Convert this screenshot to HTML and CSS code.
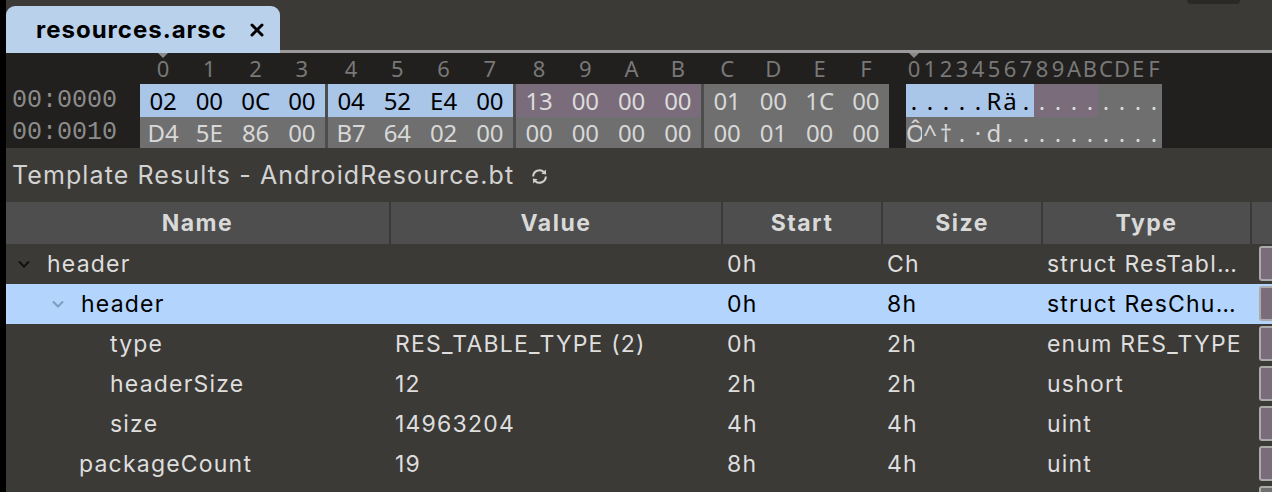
FILE: index.html
```html
<!DOCTYPE html>
<html>
<head>
<meta charset="utf-8">
<link rel="stylesheet" href="styles.css">
</head>
<body>
<div class="app">
  <div class="tabbar">
    <div class="tab">
      <span class="tab-title">resources.arsc</span>
      <svg class="tab-close" width="14" height="14" viewBox="0 0 14 14"><path d="M2 2 L12 12 M12 2 L2 12" stroke="#000" stroke-width="3" stroke-linecap="round"/></svg>
    </div>
    <div class="pill"></div>
  </div>

  <div class="hex">
    <div class="hex-row hex-head">
      <div class="addr"></div>
      <div class="groups">
        <div class="grp"><span class="mark">0</span><span>1</span><span>2</span><span>3</span></div>
        <div class="grp"><span>4</span><span>5</span><span>6</span><span>7</span></div>
        <div class="grp"><span>8</span><span>9</span><span>A</span><span>B</span></div>
        <div class="grp"><span>C</span><span>D</span><span>E</span><span>F</span></div>
      </div>
      <div class="ascii"><span class="mark">0</span><span>1</span><span>2</span><span>3</span><span>4</span><span>5</span><span>6</span><span>7</span><span>8</span><span>9</span><span>A</span><span>B</span><span>C</span><span>D</span><span>E</span><span>F</span></div>
    </div>
    <div class="hex-row data r1">
      <div class="addr">00:0000</div>
      <div class="groups">
        <div class="grp blue"><span>02</span><span>00</span><span>0C</span><span>00</span></div>
        <div class="grp blue"><span>04</span><span>52</span><span>E4</span><span>00</span></div>
        <div class="grp purple"><span>13</span><span>00</span><span>00</span><span>00</span></div>
        <div class="grp grey"><span>01</span><span>00</span><span>1C</span><span>00</span></div>
      </div>
      <div class="ascii"><span class="blue">.</span><span class="blue">.</span><span class="blue">.</span><span class="blue">.</span><span class="blue">.</span><span class="blue">R</span><span class="blue">ä</span><span class="blue">.</span><span class="purple">.</span><span class="purple">.</span><span class="purple">.</span><span class="purple">.</span><span class="grey">.</span><span class="grey">.</span><span class="grey">.</span><span class="grey">.</span></div>
    </div>
    <div class="hex-row data r2">
      <div class="addr">00:0010</div>
      <div class="groups">
        <div class="grp grey"><span>D4</span><span>5E</span><span>86</span><span>00</span></div>
        <div class="grp grey"><span>B7</span><span>64</span><span>02</span><span>00</span></div>
        <div class="grp grey"><span>00</span><span>00</span><span>00</span><span>00</span></div>
        <div class="grp grey"><span>00</span><span>01</span><span>00</span><span>00</span></div>
      </div>
      <div class="ascii"><span class="grey">Ô</span><span class="grey">^</span><span class="grey">†</span><span class="grey">.</span><span class="grey">·</span><span class="grey">d</span><span class="grey">.</span><span class="grey">.</span><span class="grey">.</span><span class="grey">.</span><span class="grey">.</span><span class="grey">.</span><span class="grey">.</span><span class="grey">.</span><span class="grey">.</span><span class="grey">.</span></div>
    </div>
  </div>

  <div class="tpl-title">
    <span>Template Results - AndroidResource.bt</span>
    <svg class="refresh" width="19" height="17" viewBox="0 0 18 16">
      <path d="M3 8 A6 6 0 0 1 13.2 3.8" fill="none" stroke="#cfcfcf" stroke-width="1.9"/>
      <polygon points="15.3,6.0 15.0,1.4 10.8,5.4" fill="#cfcfcf"/>
      <path d="M15 8 A6 6 0 0 1 4.8 12.2" fill="none" stroke="#cfcfcf" stroke-width="1.9"/>
      <polygon points="2.7,10.0 3.0,14.6 7.2,10.6" fill="#cfcfcf"/>
    </svg>
  </div>

  <div class="table">
    <div class="trow thead">
      <div class="th">Name</div>
      <div class="th">Value</div>
      <div class="th">Start</div>
      <div class="th">Size</div>
      <div class="th">Type</div>
      <div class="th"></div>
    </div>
    <div class="trow">
      <div class="td name lvl0"><svg class="chev dark" width="12" height="8" viewBox="0 0 12 8"><path d="M1 1.5 L6 6.5 L11 1.5" fill="none" stroke-width="2"/></svg><span>header</span></div>
      <div class="td"></div>
      <div class="td">0h</div>
      <div class="td">Ch</div>
      <div class="td">struct ResTableHeader</div>
      <div class="td sw"><div class="swatch"></div></div>
    </div>
    <div class="trow selected">
      <div class="td name lvl1"><svg class="chev light" width="12" height="8" viewBox="0 0 12 8"><path d="M1 1.5 L6 6.5 L11 1.5" fill="none" stroke-width="2"/></svg><span>header</span></div>
      <div class="td"></div>
      <div class="td">0h</div>
      <div class="td">8h</div>
      <div class="td">struct ResChunkHeader</div>
      <div class="td sw"><div class="swatch"></div></div>
    </div>
    <div class="trow">
      <div class="td name leaf2">type</div>
      <div class="td">RES_TABLE_TYPE (2)</div>
      <div class="td">0h</div>
      <div class="td">2h</div>
      <div class="td">enum RES_TYPE</div>
      <div class="td sw"><div class="swatch"></div></div>
    </div>
    <div class="trow">
      <div class="td name leaf2">headerSize</div>
      <div class="td">12</div>
      <div class="td">2h</div>
      <div class="td">2h</div>
      <div class="td">ushort</div>
      <div class="td sw"><div class="swatch"></div></div>
    </div>
    <div class="trow">
      <div class="td name leaf2">size</div>
      <div class="td">14963204</div>
      <div class="td">4h</div>
      <div class="td">4h</div>
      <div class="td">uint</div>
      <div class="td sw"><div class="swatch"></div></div>
    </div>
    <div class="trow">
      <div class="td name leaf1">packageCount</div>
      <div class="td">19</div>
      <div class="td">8h</div>
      <div class="td">4h</div>
      <div class="td">uint</div>
      <div class="td sw"><div class="swatch"></div></div>
    </div>
    <div class="trow">
      <div class="td name leaf1"></div>
      <div class="td"></div>
      <div class="td"></div>
      <div class="td"></div>
      <div class="td"></div>
      <div class="td sw"><div class="swatch grey"></div></div>
    </div>
  </div>
</div>
</body>
</html>
```

FILE: styles.css
```css
html, body {
  margin: 0;
  padding: 0;
  background: #3c3a36;
  overflow: hidden;
}

.app {
  width: 1266px;
  height: 492px;
  border-left: 6px solid #000;
  background: #3c3a36;
  overflow: hidden;
  font-family: Inter, "Noto Sans", sans-serif;
}

/* ---------- tab bar ---------- */
.tabbar {
  height: 50px;
  border-bottom: 3px solid #9a9a9a;
  display: flex;
  align-items: flex-end;
}

.tab {
  box-sizing: border-box;
  width: 274px;
  height: 47px;
  margin-bottom: -3px;
  background: #b9d1eb;
  border-radius: 9px 9px 0 0;
  display: flex;
  align-items: center;
  padding-left: 30px;
}

.tab-title {
  font-weight: 700;
  font-size: 24px;
  letter-spacing: 1px;
  color: #000;
}

.tab-close {
  margin-left: 23px;
}

.pill {
  align-self: flex-start;
  margin-left: auto;
  margin-right: 32px;
  width: 53px;
  height: 4px;
  background: #2a2926;
  border-radius: 0 0 7px 7px;
}

/* ---------- hex view ---------- */
.hex {
  background: #21201e;
  height: 95px;
  font-family: "Noto Sans", sans-serif;
}

.hex-row {
  display: flex;
  height: 32px;
}

.hex-head {
  height: 31px;
  color: #787878;
  font-size: 22px;
}

.addr {
  box-sizing: border-box;
  width: 134px;
  padding-left: 6px;
  font-family: "Liberation Mono", monospace;
  font-size: 25px;
  color: #8c8c8c;
  line-height: 32px;
}

.groups {
  display: flex;
  gap: 3px;
}

.data .groups {
  background: #4d4d4d;
}

.grp {
  display: flex;
  width: 185px;
}

.grp span {
  flex: 1;
  text-align: center;
}

.hex-head .grp span,
.hex-head .ascii span {
  line-height: 31px;
  position: relative;
}

.data {
  font-size: 24px;
  line-height: 32px;
}

.r1 {
  height: 33px;
  line-height: 33px;
}

.r2 {
  height: 31px;
  line-height: 31px;
}

.r1 .addr { line-height: 33px; }
.r2 .addr { line-height: 31px; }

.blue {
  background: #a9c5e8;
  color: #000;
}

.purple {
  background: #7b6c7b;
  color: #dcdcdc;
}

.grey {
  background: #6f6f6f;
  color: #d8d8d8;
}

.ascii {
  display: flex;
  margin-left: 17px;
}

.ascii span {
  width: 16px;
  text-align: center;
}

.hex-head .mark::before {
  content: "";
  position: absolute;
  top: 0;
  left: 50%;
  margin-left: -5px;
  border-left: 5px solid transparent;
  border-right: 5px solid transparent;
  border-top: 5px solid #8a8a8a;
}

/* ---------- template title ---------- */
.tpl-title {
  height: 54px;
  display: flex;
  align-items: center;
  padding-left: 6px;
  color: #d2d2d2;
  font-size: 25px;
  letter-spacing: 1.1px;
}

.refresh {
  margin-left: 16px;
  margin-top: 2px;
}

/* ---------- table ---------- */
.trow {
  display: grid;
  grid-template-columns: 383px 332px 160px 160px 209px 22px;
  height: 40px;
  color: #dedede;
  font-size: 23px;
  letter-spacing: 1.2px;
}

.thead {
  height: 42px;
  background: #4e4e4e;
}

.th {
  display: flex;
  align-items: center;
  justify-content: center;
  font-weight: 700;
  color: #d9d9d9;
  letter-spacing: 1.5px;
}

.th + .th {
  border-left: 2px solid #3a3936;
}

.td {
  box-sizing: border-box;
  display: flex;
  align-items: center;
  padding-left: 6px;
  padding-right: 6px;
  white-space: nowrap;
  overflow: hidden;
  min-width: 0;
}

.td:not(.name):not(.sw) {
  display: block;
  line-height: 40px;
  text-overflow: ellipsis;
}

.selected {
  background: #b3d4fc;
  color: #000;
}

.name.lvl0 { padding-left: 12px; }
.name.lvl1 { padding-left: 46px; }
.name.leaf1 { padding-left: 73px; }
.name.leaf2 { padding-left: 104px; }

.chev {
  margin-right: 17px;
  flex: none;
}

.chev.dark path { stroke: #111; }
.chev.light path { stroke: #7d9cc2; }

.td.sw {
  padding: 0 0 0 9px;
  align-items: flex-start;
  overflow: visible;
}

.swatch {
  box-sizing: border-box;
  width: 24px;
  height: 35px;
  margin-top: 2px;
  background: #7b6c7b;
  border: 2px solid #ababab;
  border-radius: 3px;
  flex: none;
}

.swatch.grey {
  background: #707070;
}
```
